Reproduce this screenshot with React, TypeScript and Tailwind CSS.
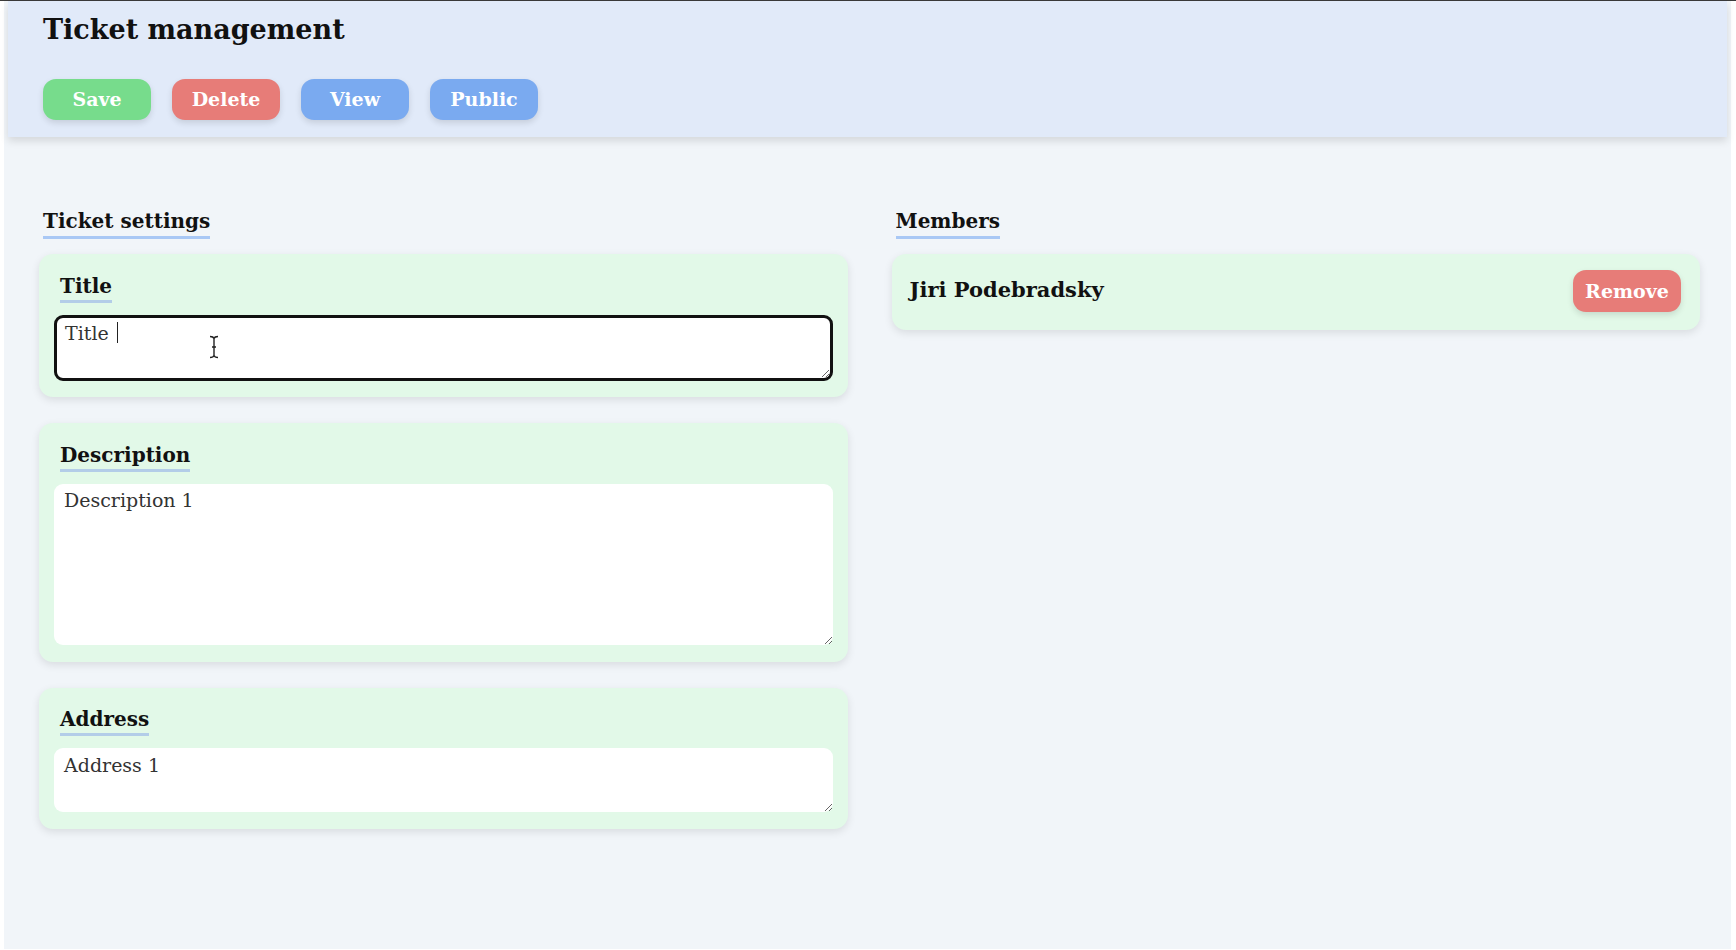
import { useState } from "react";

// Ticket management page
const font = "font-['DejaVu_Serif',serif]";

const SectionHeading = ({ children }: { children: string }) => (
  <h2 className="mb-[15px] ml-[4px]">
    <span className="inline-block border-b-[3px] border-[#a9c8f5] pb-[2px] text-[20px] leading-[26px] font-semibold text-[#111]">
      {children}
    </span>
  </h2>
);

const FieldLabel = ({ children }: { children: string }) => (
  <div className="mb-[12px] ml-[6px]">
    <span className="inline-block border-b-[3px] border-[#b3cde8] pb-[1px] text-[20px] leading-[26px] font-semibold text-[#111]">
      {children}
    </span>
  </div>
);

const App = () => {
  const [title, setTitle] = useState("Title");
  const [description, setDescription] = useState("Description 1");
  const [address, setAddress] = useState("Address 1");

  return (
    <div className={`min-h-screen bg-white border-t border-[#3a3a3a] ${font}`}>
      <div className="ml-[4px] mr-[5px] min-h-[948px] bg-[#f1f5f9]">
        {/* header */}
        <div className="mx-[4px] h-[136px] bg-[#e1eaf9] px-[35px] pt-[11px] shadow-[0_4px_8px_rgba(0,0,0,0.12)]">
          <h1 className="text-[27px] leading-[36px] font-bold text-[#111]">
            Ticket management
          </h1>
          <div className="mt-[31px] flex gap-[21px]">
            <button className="h-[41px] w-[108px] rounded-[13px] bg-[#77dc8c] text-[19px] font-bold text-white shadow-[0_3px_6px_rgba(0,0,0,0.12)]">
              Save
            </button>
            <button className="h-[41px] w-[108px] rounded-[13px] bg-[#e77c78] text-[19px] font-bold text-white shadow-[0_3px_6px_rgba(0,0,0,0.12)]">
              Delete
            </button>
            <button className="h-[41px] w-[108px] rounded-[13px] bg-[#7aaaf0] text-[19px] font-bold text-white shadow-[0_3px_6px_rgba(0,0,0,0.12)]">
              View
            </button>
            <button className="h-[41px] w-[108px] rounded-[13px] bg-[#7aaaf0] text-[19px] font-bold text-white shadow-[0_3px_6px_rgba(0,0,0,0.12)]">
              Public
            </button>
          </div>
        </div>

        {/* content */}
        <div className="grid grid-cols-2 gap-[44px] pl-[35px] pr-[31px] pt-[71px]">
          <div>
            <SectionHeading>Ticket settings</SectionHeading>

            <div className="flex flex-col gap-[26px]">
              <div className="rounded-[14px] bg-[#e2f9e8] p-[15px] pt-[19px] pb-[16px] shadow-[0_3px_8px_rgba(0,0,0,0.1)]">
                <FieldLabel>Title</FieldLabel>
                <div className="relative">
                  <textarea
                    value={title}
                    onChange={(e) => setTitle(e.target.value)}
                    className="block h-[66px] w-full rounded-[9px] border-[3px] border-[#111] bg-white px-[8px] pt-[2px] text-[19px] leading-[26px] text-[#333] outline-none"
                  />
                  <span className="absolute top-[7px] left-[63px] h-[21px] w-px bg-[#222]" />
                  {/* mouse cursor */}
                  <svg
                    className="absolute top-[20px] left-[155px]"
                    width="10"
                    height="24"
                    viewBox="0 0 10 24"
                  >
                    <path
                      d="M1 1.5 C3 1.5 4.5 2 5 3.5 C5.5 2 7 1.5 9 1.5 M5 3.5 V20.5 M1 22.5 C3 22.5 4.5 22 5 20.5 C5.5 22 7 22.5 9 22.5 M3 12 H7"
                      fill="none"
                      stroke="#222"
                      strokeWidth="1.4"
                    />
                  </svg>
                </div>
              </div>

              <div className="rounded-[14px] bg-[#e2f9e8] p-[15px] pt-[19px] pb-[17px] shadow-[0_3px_8px_rgba(0,0,0,0.1)]">
                <FieldLabel>Description</FieldLabel>
                <textarea
                  value={description}
                  onChange={(e) => setDescription(e.target.value)}
                  className="block h-[161px] w-full rounded-[9px] bg-white px-[10px] pt-[3px] text-[19px] leading-[26px] text-[#333] outline-none"
                />
              </div>

              <div className="rounded-[14px] bg-[#e2f9e8] p-[15px] pt-[18px] pb-[17px] shadow-[0_3px_8px_rgba(0,0,0,0.1)]">
                <FieldLabel>Address</FieldLabel>
                <textarea
                  value={address}
                  onChange={(e) => setAddress(e.target.value)}
                  className="mt-[2px] block h-[64px] w-full rounded-[9px] bg-white px-[10px] pt-[4px] text-[19px] leading-[26px] text-[#333] outline-none"
                />
              </div>
            </div>
          </div>

          <div>
            <SectionHeading>Members</SectionHeading>
            <div className="flex h-[76px] items-center justify-between rounded-[14px] bg-[#e2f9e8] pb-[5px] pl-[18px] pr-[19px] shadow-[0_3px_8px_rgba(0,0,0,0.1)]">
              <span className="text-[21px] font-semibold text-[#111]">
                Jiri Podebradsky
              </span>
              <button className="mt-[3px] h-[42px] w-[108px] rounded-[13px] bg-[#e77c78] text-[19px] font-bold text-white shadow-[0_3px_6px_rgba(0,0,0,0.12)]">
                Remove
              </button>
            </div>
          </div>
        </div>
      </div>
    </div>
  );
};

export default App;
